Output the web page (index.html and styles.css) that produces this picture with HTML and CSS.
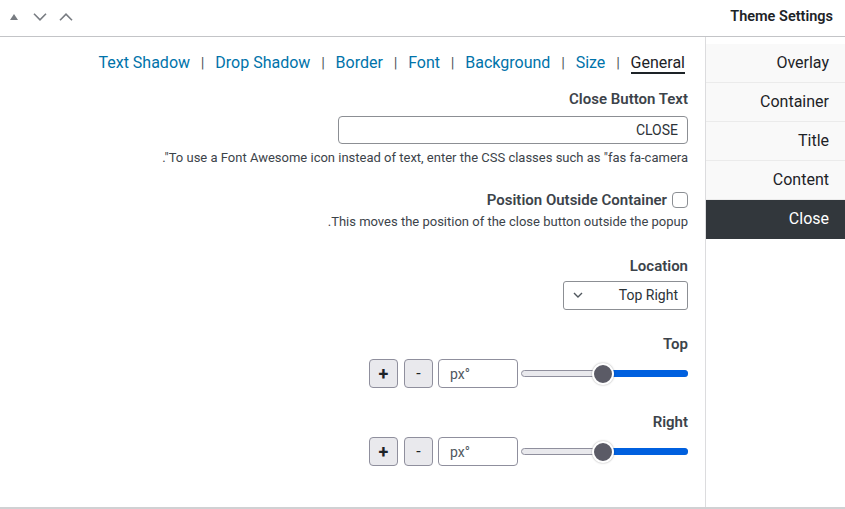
FILE: index.html
```html
<!DOCTYPE html>
<html lang="fa" dir="rtl">
<head>
<meta charset="utf-8">
<title>Theme Settings</title>
<link rel="stylesheet" href="styles.css">
</head>
<body>
<div class="panel">
  <div class="panel-header">
    <h2 class="panel-title">Theme Settings</h2>
    <div class="panel-actions">
      <svg class="icon-chevron" width="14" height="8" viewBox="0 0 14 8" aria-hidden="true"><path d="M1 7.2 L7 1.2 L13 7.2" /></svg>
      <svg class="icon-chevron" width="14" height="8" viewBox="0 0 14 8" aria-hidden="true"><path d="M1 0.8 L7 6.8 L13 0.8" /></svg>
      <svg class="icon-tri" width="8" height="6" viewBox="0 0 8 6" aria-hidden="true"><path d="M4 0 L8 6 L0 6 Z" /></svg>
    </div>
  </div>
  <div class="panel-body">
    <ul class="side-tabs">
      <li class="side-tab">Overlay</li>
      <li class="side-tab">Container</li>
      <li class="side-tab">Title</li>
      <li class="side-tab">Content</li>
      <li class="side-tab active">Close</li>
    </ul>
    <div class="main">
      <nav class="sub-tabs">
        <a class="sub-tab">Text Shadow</a><span class="sep">|</span><a class="sub-tab">Drop Shadow</a><span class="sep">|</span><a class="sub-tab">Border</a><span class="sep">|</span><a class="sub-tab">Font</a><span class="sep">|</span><a class="sub-tab">Background</a><span class="sep">|</span><a class="sub-tab">Size</a><span class="sep">|</span><a class="sub-tab current">General</a>
      </nav>

      <div class="field field-first">
        <label class="field-label">Close Button Text</label>
        <input class="text-input" type="text" value="CLOSE">
        <p class="desc">To use a Font Awesome icon instead of text, enter the CSS classes such as "fas fa-camera".</p>
      </div>

      <div class="field field-check">
        <div class="check-row">
          <span class="checkbox"></span>
          <label class="field-label">Position Outside Container</label>
        </div>
        <p class="desc desc-tight">This moves the position of the close button outside the popup.</p>
      </div>

      <div class="field field-loc">
        <label class="field-label">Location</label>
        <div class="select">
          <span class="select-value">Top Right</span>
          <svg class="select-arrow" width="10" height="6" viewBox="0 0 10 6" aria-hidden="true"><path d="M1 1 L5 5 L9 1" /></svg>
        </div>
      </div>

      <div class="field">
        <label class="field-label">Top</label>
        <div class="range-row">
          <div class="range">
            <div class="range-track"></div>
            <div class="range-fill"></div>
            <div class="range-thumb"></div>
          </div>
          <input class="num-input" type="text" dir="ltr" value="px°">
          <button class="step-btn">-</button>
          <button class="step-btn plus">+</button>
        </div>
      </div>

      <div class="field">
        <label class="field-label">Right</label>
        <div class="range-row">
          <div class="range">
            <div class="range-track"></div>
            <div class="range-fill"></div>
            <div class="range-thumb"></div>
          </div>
          <input class="num-input" type="text" dir="ltr" value="px°">
          <button class="step-btn">-</button>
          <button class="step-btn plus">+</button>
        </div>
      </div>
    </div>
  </div>
</div>
</body>
</html>
```

FILE: styles.css
```css
* { box-sizing: border-box; }
html, body { margin: 0; padding: 0; background: #fff; }
body {
  font-family: Roboto, "Noto Sans", "DejaVu Sans", sans-serif;
  color: #1d2327;
  width: 845px;
  height: 509px;
  overflow: hidden;
}

.panel {
  height: 509px;
  display: flex;
  flex-direction: column;
  border-bottom: 2px solid #d0d1d3;
}

.panel-header {
  height: 37px;
  flex: none;
  display: flex;
  justify-content: space-between;
  align-items: center;
  padding: 0 12px 3px 10px;
  border-bottom: 1px solid #c3c4c7;
}
.panel-title {
  margin: 0;
  font-size: 14.5px;
  font-weight: 600;
  line-height: 20px;
  color: #1d2327;
}
.panel-actions {
  display: flex;
  align-items: center;
  gap: 12px;
}
.icon-chevron path {
  fill: none;
  stroke: #787c82;
  stroke-width: 1.6;
}
.icon-tri { margin-right: 3px; }
.icon-tri path { fill: #787c82; }

.panel-body {
  flex: 1;
  display: flex;
  min-height: 0;
}

.side-tabs {
  width: 140px;
  flex: none;
  margin: 0;
  padding: 7px 0 0;
  list-style: none;
  border-left: 1px solid #dcdcde;
}
.side-tab {
  height: 39px;
  display: flex;
  align-items: center;
  padding: 0 16px 1px;
  font-size: 16px;
  color: #1d2327;
  background: #f9f9f9;
  border-bottom: 1px solid #ebebeb;
}
.side-tab.active {
  background: #32373c;
  color: #fff;
  border-bottom-color: #32373c;
}

.main {
  flex: 1;
  padding: 16px 17px 0 0;
}

.sub-tabs {
  font-size: 16px;
  line-height: 20px;
  white-space: nowrap;
  padding-right: 3px;
}
.sub-tab {
  color: #0073aa;
  text-decoration: none;
}
.sub-tab.current {
  color: #1d2327;
  border-bottom: 2px solid #1d2327;
}
.sep {
  color: #50575e;
  margin: 0 10.8px;
  font-size: 15px;
}

.field {
  margin-top: 24px;
  display: flex;
  flex-direction: column;
  align-items: flex-start;
}
.field-first { margin-top: 16px; }
.field-check { margin-top: 23px; }
.field-loc { margin-top: 25px; }

.field-label {
  font-size: 15px;
  font-weight: 600;
  line-height: 20px;
  color: #3c434a;
}

.text-input {
  margin-top: 7px;
  width: 350px;
  height: 28px;
  border: 1px solid #8c8f94;
  border-radius: 4px;
  padding: 0 9px 1px;
  font: 14px Roboto, "Noto Sans", sans-serif;
  color: #2c3338;
  background: #fff;
  text-align: right;
}

.desc {
  margin: 5px 0 0;
  font-size: 13px;
  line-height: 18px;
  color: #3c434a;
}
.desc-tight { margin-top: 3px; }

.check-row {
  display: flex;
  align-items: center;
  gap: 5px;
}
.checkbox {
  width: 16px;
  height: 16px;
  border: 1px solid #8c8f94;
  border-radius: 4px;
  background: #fff;
}

.select {
  margin-top: 5px;
  width: 125px;
  height: 29px;
  border: 1px solid #8c8f94;
  border-radius: 3px;
  display: flex;
  align-items: center;
  justify-content: space-between;
  padding: 0 9px 1px 9px;
  font-size: 14px;
  color: #2c3338;
}
.select-arrow path {
  fill: none;
  stroke: #50575e;
  stroke-width: 1.4;
}

.range-row {
  margin-top: 5px;
  display: flex;
  align-items: center;
}
.range {
  position: relative;
  width: 168px;
  height: 29px;
}
.range-track {
  position: absolute;
  left: 1px;
  right: 0;
  top: 11px;
  height: 7px;
  border: 1px solid #8f8f9d;
  border-radius: 4px;
  background: #e9e9ed;
}
.range-fill {
  position: absolute;
  right: 0;
  width: 86px;
  top: 11px;
  height: 7px;
  border-radius: 4px;
  background: #0060df;
}
.range-thumb {
  position: absolute;
  right: 74px;
  top: 4px;
  width: 22px;
  height: 22px;
  border-radius: 50%;
  background: #5b5b66;
  border: 2px solid #fff;
  box-shadow: 0 0 2px rgba(0, 0, 0, 0.35);
}

.num-input {
  margin-right: 2px;
  width: 80px;
  height: 29px;
  border: 1px solid #8f8f9d;
  border-radius: 4px;
  padding: 0 11px;
  font: 14px Roboto, "Noto Sans", "DejaVu Sans", sans-serif;
  color: #50575e;
  background: #fff;
  text-align: left;
}

.step-btn {
  margin: 0 5px 0 0;
  width: 29px;
  height: 29px;
  padding: 0;
  border: 1px solid #8f8f9d;
  border-radius: 4px;
  background: #e9e9ed;
  font: 16px Roboto, "Noto Sans", sans-serif;
  color: #1d2327;
}
.step-btn.plus {
  margin-right: 6px;
  font-weight: 700;
  font-size: 18px;
}
```
